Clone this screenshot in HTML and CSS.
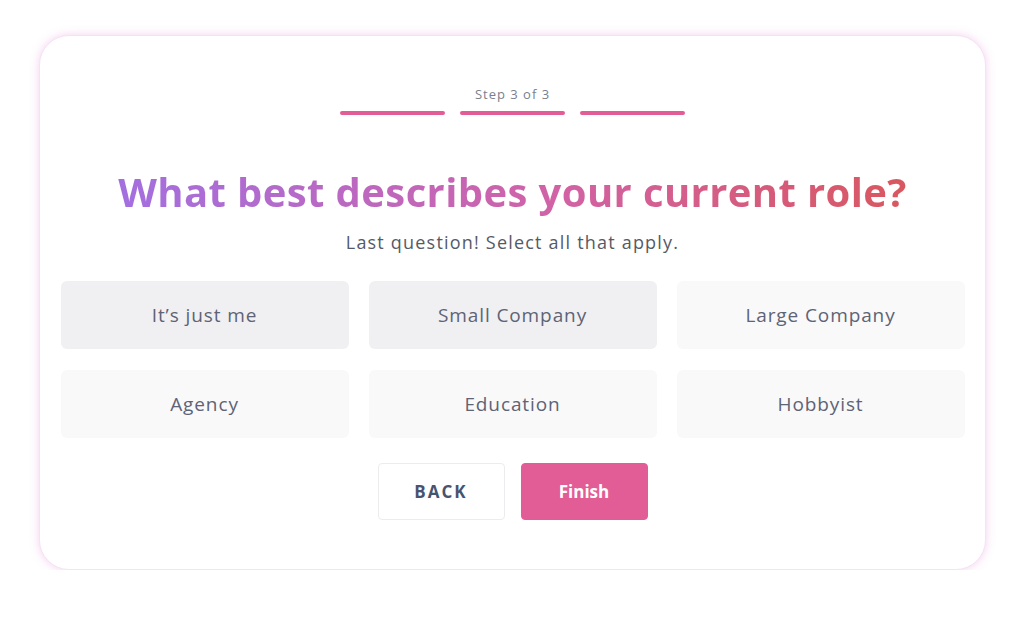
FILE: index.html
```html
<!DOCTYPE html>
<html lang="en">
<head>
    <meta charset="UTF-8">
    <meta name="viewport" content="width=device-width, initial-scale=1.0">
    <title>Onboarding - Step 3</title>
    <link rel="stylesheet" href="styles.css">
</head>
<body>
<div class="page">
    <div class="card">
        <div class="step-label">Step 3 of 3</div>
        <div class="progress">
            <span class="progress-bar"></span>
            <span class="progress-bar"></span>
            <span class="progress-bar"></span>
        </div>

        <h1 class="question">What best describes your current role?</h1>
        <p class="hint">Last question! Select all that apply.</p>

        <div class="options">
            <button class="option selected">It’s just me</button>
            <button class="option selected">Small Company</button>
            <button class="option">Large Company</button>
            <button class="option">Agency</button>
            <button class="option">Education</button>
            <button class="option">Hobbyist</button>
        </div>

        <div class="actions">
            <button class="btn btn-back">BACK</button>
            <button class="btn btn-finish">Finish</button>
        </div>
    </div>
</div>
</body>
</html>
```

FILE: styles.css
```css
/* General styles */
body {
    font-family: 'Open Sans', 'Noto Sans', sans-serif;
    background-color: #fff;
    margin: 0;
    padding: 0;
    color: #5a6072;
}

.page {
    padding-top: 35px;
}

/* Card */
.card {
    width: 947px;
    box-sizing: border-box;
    margin: 0 auto;
    padding: 50px 20px 49px 21px;
    background-color: #fff;
    border: 1px solid #f6e2f4;
    border-radius: 30px;
    box-shadow: 0 0 10px rgba(228, 146, 218, 0.4);
}

/* Step indicator */
.step-label {
    text-align: center;
    font-size: 13px;
    line-height: 16px;
    letter-spacing: 1px;
    color: #7a7f8c;
}

.progress {
    display: flex;
    justify-content: center;
    gap: 15px;
    margin-top: 9px;
}

.progress-bar {
    width: 105px;
    height: 4px;
    border-radius: 2px;
    background-color: #e25d96;
}

/* Question */
.question {
    margin: 53px auto 0;
    width: fit-content;
    text-align: center;
    font-size: 40px;
    line-height: 48px;
    font-weight: 700;
    letter-spacing: 0.4px;
    background: linear-gradient(90deg, #a36fe0 0%, #d162a6 55%, #d9575f 100%);
    -webkit-background-clip: text;
    background-clip: text;
    color: transparent;
}

.hint {
    margin: 14px 0 0;
    text-align: center;
    font-size: 18px;
    line-height: 24px;
    letter-spacing: 1.2px;
    color: #555a66;
}

/* Options */
.options {
    display: grid;
    grid-template-columns: repeat(3, 1fr);
    column-gap: 20px;
    row-gap: 21px;
    margin-top: 27px;
}

.option {
    height: 68px;
    border: none;
    border-radius: 6px;
    background-color: #f9f9fa;
    font-family: inherit;
    font-size: 19px;
    letter-spacing: 0.9px;
    color: #5e6375;
    cursor: pointer;
}

.option.selected {
    background-color: #f0f0f3;
}

/* Buttons */
.actions {
    display: flex;
    justify-content: center;
    gap: 16px;
    margin-top: 25px;
}

.btn {
    width: 127px;
    height: 57px;
    border-radius: 4px;
    font-family: inherit;
    font-size: 17px;
    font-weight: 700;
    cursor: pointer;
}

.btn-back {
    background-color: #fff;
    border: 1px solid #ececef;
    color: #485370;
    letter-spacing: 2px;
}

.btn-finish {
    background-color: #e25d96;
    border: 1px solid #e25d96;
    color: #fff;
}
```
